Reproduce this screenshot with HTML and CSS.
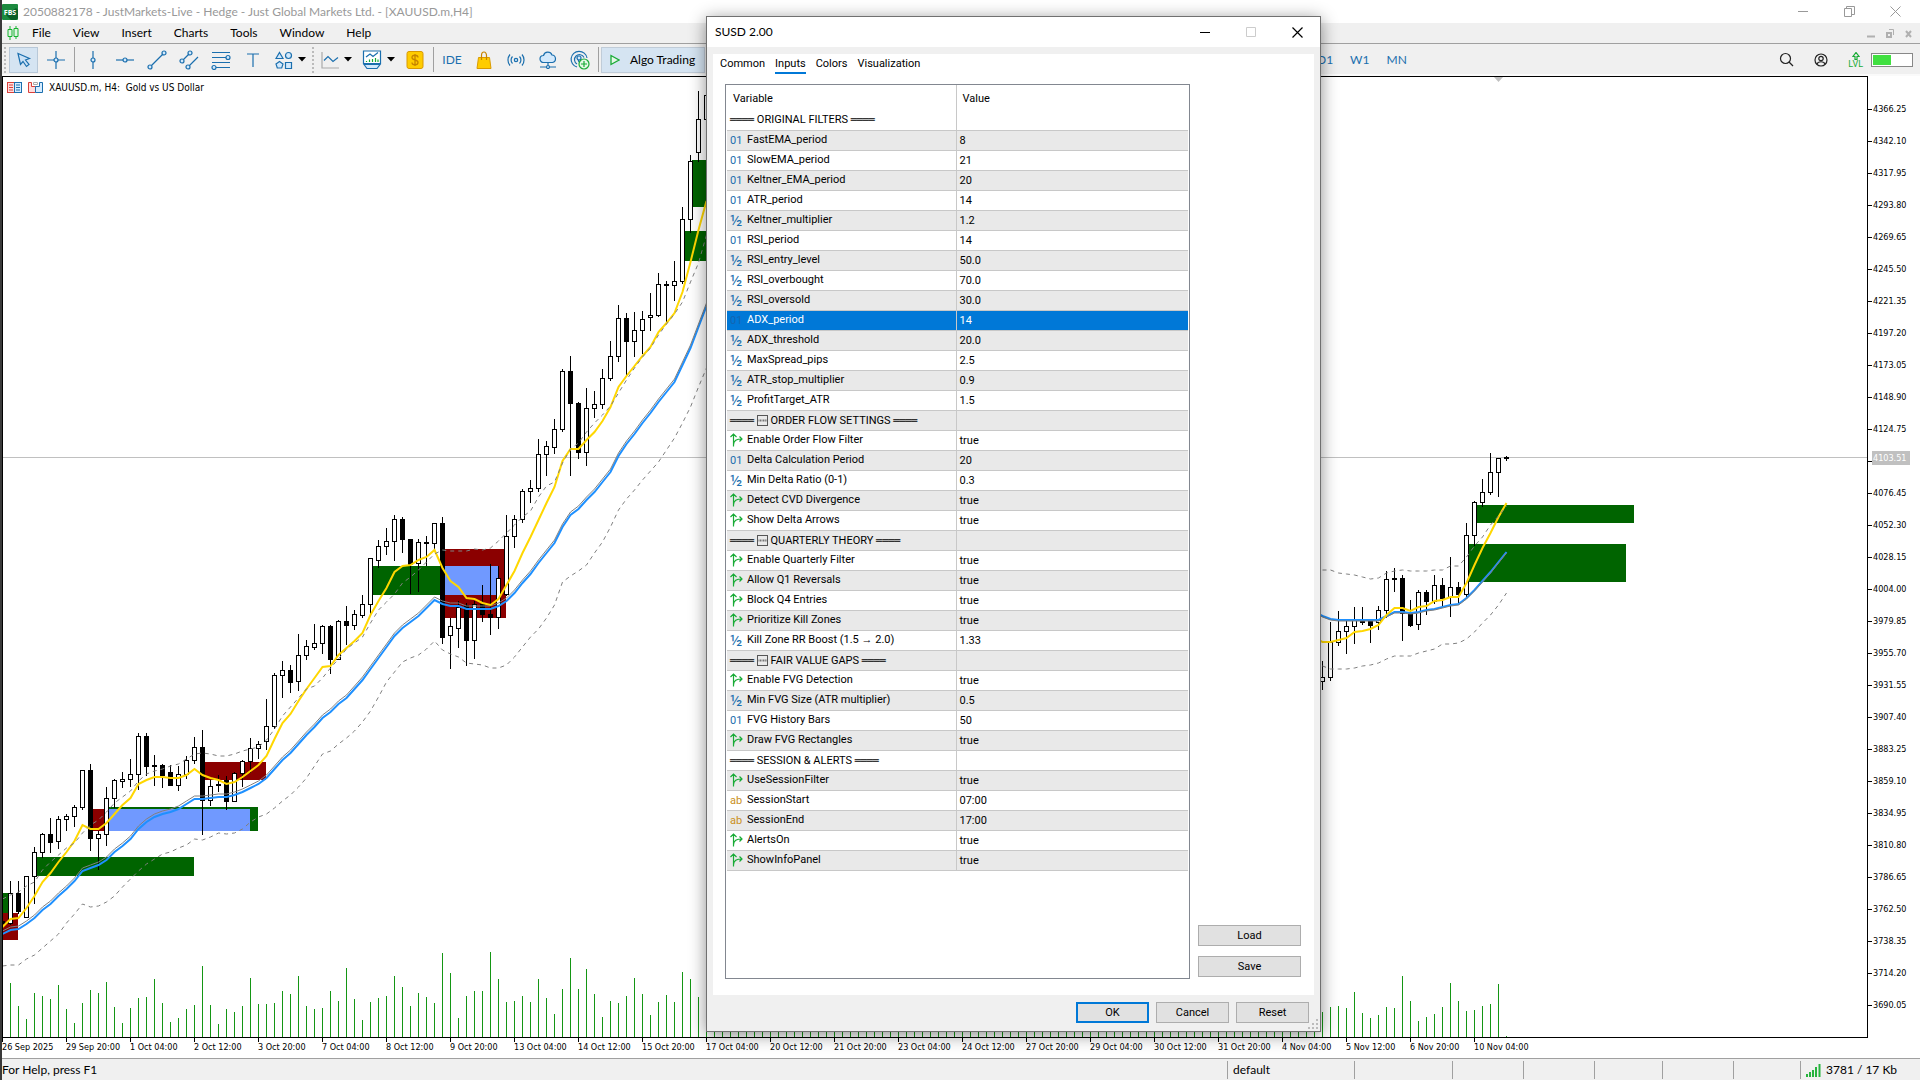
FILE: index.html
```html
<!DOCTYPE html>
<html lang="en">
<head>
<meta charset="utf-8">
<title>2050882178 - JustMarkets-Live - Hedge - Just Global Markets Ltd. - [XAUUSD.m,H4]</title>
<link rel="stylesheet" href="styles.css">
</head>
<body>
<svg class="sprite" aria-hidden="true">
  <symbol id="i-flag" viewBox="0 0 13 14"><path d="M3.500 13.500V1.500M.5 4l3-3 3 3M3.500 12c0-4.500 3-6 8.500-6M9.500 3.500L12 6 9.500 8.500" fill="none" stroke="#19ab36" stroke-width="1.200"/></symbol>
  <symbol id="i-new" viewBox="0 0 11 11"><rect x=".5" y=".5" width="10" height="10" fill="none" stroke="#555"/><path d="M2 4.500v2M3.500 4.500v2M5 4.500v2M6.500 4.500v2M8 4.500v2M9 4.500v2" stroke="#555" stroke-width=".8"/></symbol>
  <symbol id="i-caret" viewBox="0 0 8 5"><path d="M0 0h8L4 4.500z" fill="#000"/></symbol>
</svg>

<div class="app">
  <header class="titlebar">
    <svg class="logo" viewBox="0 0 16 16"><rect width="16" height="16" rx="1" fill="#1c8a3f"/><path d="M4 11l10-7 2 2v8l-2 2H9z" fill="#0b5f28"/><text x="8" y="11" text-anchor="middle" class="logo-text">FBS</text></svg>
    <h1 class="app-title">2050882178 - JustMarkets-Live - Hedge - Just Global Markets Ltd. - [XAUUSD.m,H4]</h1>
    <div class="window-buttons">
      <button type="button" aria-label="Minimize"><svg width="11" height="11"><path d="M0 5.500h10" stroke="#999"/></svg></button>
      <button type="button" aria-label="Restore"><svg width="11" height="11"><path d="M.5 2.500h7v8h-7zM2.500 2.500v-2h8v8h-3" fill="none" stroke="#999"/></svg></button>
      <button type="button" aria-label="Close"><svg width="11" height="11"><path d="M.5.5l10 10M10.500.5l-10 10" stroke="#999"/></svg></button>
    </div>
  </header>

  <nav class="menubar">
    <svg class="menu-logo" viewBox="0 0 12 14"><path d="M3 0v14M9 0v13" stroke="#15b32f"/><path d="M1 3.500h4v7H1zM7 2.500h4v8H7z" fill="#dff5e2" stroke="#15b32f"/></svg>
    <button type="button">File</button><button type="button">View</button><button type="button">Insert</button><button type="button">Charts</button><button type="button">Tools</button><button type="button">Window</button><button type="button">Help</button>
    <div class="mdi-buttons">
      <svg width="8" height="9"><path d="M0 7.500h8" stroke="#b0b0b0" stroke-width="2"/></svg>
      <svg width="8" height="9"><path d="M1 4h4v4H1z" fill="none" stroke="#b0b0b0" stroke-width="2"/><path d="M3 .5h4.500V6" fill="none" stroke="#b0b0b0"/></svg>
      <svg width="8" height="9"><path d="M1 2l5 6M6 2L1 8" stroke="#b0b0b0" stroke-width="2"/></svg>
    </div>
  </nav>

  <div class="toolbar">
    <span class="grip"></span>
    <button type="button" class="tool pointer" aria-label="Cursor"><svg width="16" height="16" viewBox="0 0 16 16"><path d="M2 1.500l2.500 11 2.500-3 3.500 5 2.500-2-3.500-4.500 4-1.500z" fill="#cbe2f7" stroke="#1b6fae" stroke-width="1.200"/></svg></button>
    <button type="button" class="tool" aria-label="Crosshair"><svg width="18" height="18" viewBox="0 0 18 18" class="line"><path d="M9 0v18M0 9h18"/><circle cx="9" cy="9" r="2" class="dot"/></svg></button>
    <span class="sep"></span>
    <button type="button" class="tool" aria-label="Vertical line"><svg width="18" height="18" viewBox="0 0 18 18" class="line"><path d="M9 0v18"/><circle cx="9" cy="9" r="2" class="dot"/></svg></button>
    <button type="button" class="tool" aria-label="Horizontal line"><svg width="18" height="18" viewBox="0 0 18 18" class="line"><path d="M0 9h18"/><circle cx="9" cy="9" r="2" class="dot"/></svg></button>
    <button type="button" class="tool" aria-label="Trendline"><svg width="20" height="20" viewBox="0 0 20 20" class="line"><path d="M3 17L17 3"/><circle cx="3" cy="17" r="2" class="dot"/><circle cx="17" cy="3" r="2" class="dot"/></svg></button>
    <button type="button" class="tool" aria-label="Channel"><svg width="20" height="20" viewBox="0 0 20 20" class="line"><path d="M3 11l8-8M9 17L19 7"/><circle cx="3" cy="11" r="2" class="dot"/><circle cx="11" cy="3" r="2" class="dot"/><circle cx="9" cy="17" r="2" class="dot"/></svg></button>
    <button type="button" class="tool" aria-label="Fibonacci"><svg width="20" height="20" viewBox="0 0 20 20" class="line"><path d="M1 2.500h18M1 7.500h14M1 12.500h18M5 17.500h14"/><circle cx="17" cy="7.500" r="2" class="dot"/><circle cx="3" cy="17.500" r="2" class="dot"/></svg></button>
    <button type="button" class="tool" aria-label="Text"><svg width="14" height="14" viewBox="0 0 14 14" class="line"><path d="M1 1h12M7 1v13"/></svg></button>
    <button type="button" class="tool wide" aria-label="Shapes"><svg width="18" height="18" viewBox="0 0 18 18" class="line"><path d="M4.500 1.500L8 7.500H1z" class="dot"/><circle cx="13.500" cy="4.500" r="3" class="dot"/><path d="M4.500 10.500L8 13l-1.300 4H2.300L1 13z" class="dot"/><path d="M10.500 11.500h6v6h-6z" class="dot"/></svg><svg class="caret"><use href="#i-caret"/></svg></button>
    <span class="grip"></span>
    <button type="button" class="tool wide" aria-label="Chart type"><svg width="18" height="18" viewBox="0 0 18 18" class="line"><path d="M1 1v16h17" stroke="#aaa"/><path d="M3 9.500l4-4 5 5 5-4"/></svg><svg class="caret"><use href="#i-caret"/></svg></button>
    <button type="button" class="tool wide" aria-label="Indicators"><svg width="20" height="20" viewBox="0 0 20 20" class="line"><path d="M1.500 1h17v12.500h-17z" fill="#fff"/><path d="M4 7l4-3 3 2.500 5-4"/><path d="M4.500 12v-1M7.500 12V9.500M10.500 12V9M13.500 12V8M16 12V9.500" stroke="#19ab36"/><path d="M2 14.500l3 4h10l3-4z" class="dot"/></svg><svg class="caret"><use href="#i-caret"/></svg></button>
    <button type="button" class="tool" aria-label="Trade"><svg width="18" height="18" viewBox="0 0 18 18"><rect x="1" y=".5" width="16" height="17" rx="2" fill="#fc0" stroke="#d99a00"/><path d="M12 6.500c0-3-6-3-6 0 0 3.500 6 1.500 6 5 0 3-6 3-6 0M9 3v12" fill="none" stroke="#c68400" stroke-width="1.300"/></svg></button>
    <span class="sep"></span>
    <button type="button" class="tool text-tool">IDE</button>
    <button type="button" class="tool" aria-label="Market"><svg width="16" height="18" viewBox="0 0 16 18"><path d="M2.500 6.500h11l1.500 11H1z" fill="#fc0" stroke="#d99a00"/><path d="M5.500 9V4.500a2.500 3.500 0 015 0V9" fill="none" stroke="#c68400" stroke-width="1.200"/></svg></button>
    <button type="button" class="tool" aria-label="Signals"><svg width="18" height="14" viewBox="0 0 18 14" class="line"><circle cx="9" cy="7" r="1.700" class="dot"/><path d="M5.500 3.500a5 5 0 000 7M3 1.500a8.500 8.500 0 000 11M12.500 3.500a5 5 0 010 7M15 1.500a8.500 8.500 0 010 11"/></svg></button>
    <button type="button" class="tool" aria-label="VPS"><svg width="18" height="18" viewBox="0 0 18 18" class="line"><path d="M4.500 11.500a3.500 3.500 0 010-7 4.500 4.500 0 018.500-.500 3.800 3.800 0 01.5 7.500z" class="dot"/><path d="M9 11.500v3M1 16h16"/><circle cx="9" cy="16" r="1.500" class="dot"/></svg></button>
    <button type="button" class="tool" aria-label="Copy trading"><svg width="20" height="20" viewBox="0 0 20 20" class="line"><path d="M7 17A8 8 0 1117 8M7 14a5 5 0 117-6.500M9 12L7.500 8"/><circle cx="9" cy="8" r="2" class="dot"/><circle cx="14" cy="14" r="5" fill="#e3f7e5" stroke="#19ab36"/><path d="M14 11v6M11 14h6" stroke="#19ab36"/></svg></button>
    <span class="sep"></span>
    <button type="button" class="algo"><svg width="10" height="12" viewBox="0 0 10 12"><path d="M1 1.500v9L9 6z" fill="#e6f8e8" stroke="#19ab36" stroke-width="1.300"/></svg>Algo Trading</button>
    <div class="timeframes"><button type="button">D1</button><button type="button">W1</button><button type="button">MN</button></div>
    <div class="toolbar-right">
      <button type="button" aria-label="Search"><svg width="15" height="15" viewBox="0 0 15 15"><circle cx="6.500" cy="6.500" r="5" fill="none" stroke="#222" stroke-width="1.200"/><path d="M10 10l4 4" stroke="#222" stroke-width="1.300"/></svg></button>
      <button type="button" aria-label="Account"><svg width="14" height="14" viewBox="0 0 14 14" fill="none" stroke="#222" stroke-width="1.200"><circle cx="7" cy="7" r="6"/><circle cx="7" cy="5.500" r="2.200"/><path d="M3 11c1-3 7-3 8 0"/></svg></button>
      <span class="lvl"><svg width="8" height="8" viewBox="0 0 8 8"><path d="M3 7.500V4.500H1L4 .5l3 4H5v3z" fill="none" stroke="#19ab36" stroke-width="1.200"/></svg>LVL</span>
      <span class="battery"><i></i></span>
    </div>
  </div>

  <main class="chart">
    <section class="plot" aria-label="XAUUSD.m H4 chart">
      <svg id="plot" class="plot-canvas"></svg>
      <div class="symbol">
        <svg width="15" height="12" viewBox="0 0 15 12"><rect x=".5" y=".5" width="7" height="10" fill="#fdd" stroke="#d9403a"/><rect x="7.500" y=".5" width="7" height="10" fill="#d6ecff" stroke="#1b6fae"/><path d="M2 3h4M2 5.500h4M2 8h4" stroke="#d9403a"/><path d="M9 3h4M9 5.500h4M9 8h4" stroke="#1b6fae"/></svg>
        <svg width="15" height="12" viewBox="0 0 15 12"><path d="M.5.5h3v4h4v6h-7z" fill="#fdd" stroke="#d9403a"/><path d="M14.500.5h-3v4h-4v6h7z" fill="#d6ecff" stroke="#1b6fae"/><path d="M5.500.5h4v2h-4z" fill="none" stroke="#aaa"/></svg>
        <span>XAUUSD.m, H4:&nbsp; Gold vs US Dollar</span>
      </div>
    </section>
    <ol class="price-axis">
      <li>4366.25</li><li>4342.10</li><li>4317.95</li><li>4293.80</li><li>4269.65</li><li>4245.50</li><li>4221.35</li><li>4197.20</li><li>4173.05</li><li>4148.90</li><li>4124.75</li><li>4100.60</li><li>4076.45</li><li>4052.30</li><li>4028.15</li><li>4004.00</li><li>3979.85</li><li>3955.70</li><li>3931.55</li><li>3907.40</li><li>3883.25</li><li>3859.10</li><li>3834.95</li><li>3810.80</li><li>3786.65</li><li>3762.50</li><li>3738.35</li><li>3714.20</li><li>3690.05</li>
      <li class="last-price">4103.51</li>
    </ol>
    <ol class="time-axis">
      <li>26 Sep 2025</li><li>29 Sep 20:00</li><li>1 Oct 04:00</li><li>2 Oct 12:00</li><li>3 Oct 20:00</li><li>7 Oct 04:00</li><li>8 Oct 12:00</li><li>9 Oct 20:00</li><li>13 Oct 04:00</li><li>14 Oct 12:00</li><li>15 Oct 20:00</li><li>17 Oct 04:00</li><li>20 Oct 12:00</li><li>21 Oct 20:00</li><li>23 Oct 04:00</li><li>24 Oct 12:00</li><li>27 Oct 20:00</li><li>29 Oct 04:00</li><li>30 Oct 12:00</li><li>31 Oct 20:00</li><li>4 Nov 04:00</li><li>5 Nov 12:00</li><li>6 Nov 20:00</li><li>10 Nov 04:00</li>
    </ol>
  </main>

  <footer class="statusbar">
    <span class="help">For Help, press F1</span>
    <span class="cell profile">default</span><span class="cell w98"></span><span class="cell w71"></span><span class="cell w71"></span><span class="cell w68"></span><span class="cell w71"></span><span class="cell w67"></span>
    <span class="cell traffic"><svg width="15" height="14" viewBox="0 0 15 14"><path d="M1 14v-3M4 14V9M7 14V7M10 14V4M13.500 14V1" stroke="#27b33e" stroke-width="2"/></svg>3781 / 17 Kb</span>
  </footer>
</div>

<div class="dialog" role="dialog" aria-labelledby="dlg-title">
  <div class="dialog-title">
    <h2 id="dlg-title">SUSD 2.00</h2>
    <button type="button" aria-label="Minimize"><svg width="11" height="11"><path d="M0 5.500h10" stroke="#000"/></svg></button>
    <button type="button" aria-label="Maximize" disabled><svg width="11" height="11"><path d="M.5.5h9v9h-9z" fill="none" stroke="#ccc"/></svg></button>
    <button type="button" aria-label="Close"><svg width="11" height="11"><path d="M.5.5l10 10M10.500.5l-10 10" stroke="#000" stroke-width="1.200"/></svg></button>
  </div>
  <div class="dialog-page">
    <div class="tabs" role="tablist">
      <button type="button" role="tab">Common</button><button type="button" role="tab" class="active" aria-selected="true">Inputs</button><button type="button" role="tab">Colors</button><button type="button" role="tab">Visualization</button>
    </div>
    <div class="page-body">
      <div class="grid">
        <table>
          <thead><tr><th>Variable</th><th>Value</th></tr></thead>
          <tbody>
            <tr class="group"><td><b>════</b> ORIGINAL FILTERS <b>════</b></td><td></td></tr>
            <tr><td><i class="int">01</i>FastEMA_period</td><td>8</td></tr>
            <tr><td><i class="int">01</i>SlowEMA_period</td><td>21</td></tr>
            <tr><td><i class="int">01</i>Keltner_EMA_period</td><td>20</td></tr>
            <tr><td><i class="int">01</i>ATR_period</td><td>14</td></tr>
            <tr><td><i class="dbl">½</i>Keltner_multiplier</td><td>1.2</td></tr>
            <tr><td><i class="int">01</i>RSI_period</td><td>14</td></tr>
            <tr><td><i class="dbl">½</i>RSI_entry_level</td><td>50.0</td></tr>
            <tr><td><i class="dbl">½</i>RSI_overbought</td><td>70.0</td></tr>
            <tr><td><i class="dbl">½</i>RSI_oversold</td><td>30.0</td></tr>
            <tr class="selected"><td><i class="int">01</i>ADX_period</td><td>14</td></tr>
            <tr><td><i class="dbl">½</i>ADX_threshold</td><td>20.0</td></tr>
            <tr><td><i class="dbl">½</i>MaxSpread_pips</td><td>2.5</td></tr>
            <tr><td><i class="dbl">½</i>ATR_stop_multiplier</td><td>0.9</td></tr>
            <tr><td><i class="dbl">½</i>ProfitTarget_ATR</td><td>1.5</td></tr>
            <tr class="group"><td><b>════</b> <svg class="new"><use href="#i-new"/></svg> ORDER FLOW SETTINGS <b>════</b></td><td></td></tr>
            <tr><td><i><svg class="flag"><use href="#i-flag"/></svg></i>Enable Order Flow Filter</td><td>true</td></tr>
            <tr><td><i class="int">01</i>Delta Calculation Period</td><td>20</td></tr>
            <tr><td><i class="dbl">½</i>Min Delta Ratio (0-1)</td><td>0.3</td></tr>
            <tr><td><i><svg class="flag"><use href="#i-flag"/></svg></i>Detect CVD Divergence</td><td>true</td></tr>
            <tr><td><i><svg class="flag"><use href="#i-flag"/></svg></i>Show Delta Arrows</td><td>true</td></tr>
            <tr class="group"><td><b>════</b> <svg class="new"><use href="#i-new"/></svg> QUARTERLY THEORY <b>════</b></td><td></td></tr>
            <tr><td><i><svg class="flag"><use href="#i-flag"/></svg></i>Enable Quarterly Filter</td><td>true</td></tr>
            <tr><td><i><svg class="flag"><use href="#i-flag"/></svg></i>Allow Q1 Reversals</td><td>true</td></tr>
            <tr><td><i><svg class="flag"><use href="#i-flag"/></svg></i>Block Q4 Entries</td><td>true</td></tr>
            <tr><td><i><svg class="flag"><use href="#i-flag"/></svg></i>Prioritize Kill Zones</td><td>true</td></tr>
            <tr><td><i class="dbl">½</i>Kill Zone RR Boost (1.5 → 2.0)</td><td>1.33</td></tr>
            <tr class="group"><td><b>════</b> <svg class="new"><use href="#i-new"/></svg> FAIR VALUE GAPS <b>════</b></td><td></td></tr>
            <tr><td><i><svg class="flag"><use href="#i-flag"/></svg></i>Enable FVG Detection</td><td>true</td></tr>
            <tr><td><i class="dbl">½</i>Min FVG Size (ATR multiplier)</td><td>0.5</td></tr>
            <tr><td><i class="int">01</i>FVG History Bars</td><td>50</td></tr>
            <tr><td><i><svg class="flag"><use href="#i-flag"/></svg></i>Draw FVG Rectangles</td><td>true</td></tr>
            <tr class="group"><td><b>════</b> SESSION &amp; ALERTS <b>════</b></td><td></td></tr>
            <tr><td><i><svg class="flag"><use href="#i-flag"/></svg></i>UseSessionFilter</td><td>true</td></tr>
            <tr><td><i class="str">ab</i>SessionStart</td><td>07:00</td></tr>
            <tr><td><i class="str">ab</i>SessionEnd</td><td>17:00</td></tr>
            <tr><td><i><svg class="flag"><use href="#i-flag"/></svg></i>AlertsOn</td><td>true</td></tr>
            <tr><td><i><svg class="flag"><use href="#i-flag"/></svg></i>ShowInfoPanel</td><td>true</td></tr>
          </tbody>
        </table>
      </div>
      <div class="side-buttons"><button type="button" class="btn">Load</button><button type="button" class="btn">Save</button></div>
    </div>
  </div>
  <div class="dialog-actions">
    <button type="button" class="btn default">OK</button><button type="button" class="btn">Cancel</button><button type="button" class="btn">Reset</button>
  </div>
  <svg class="resize" width="11" height="11" aria-hidden="true"><path d="M8 1h2M8 5h2M8 9h2M4 5h2M4 9h2M0 9h2" stroke="#bbb" stroke-width="2"/></svg>
</div>
<script src="chart.js"></script>
</body>
</html>
```
FILE: styles.css
```css
* { box-sizing: border-box; }
body { margin: 0; background: #3a3a3a; color: #000; font: 12px/16px Lato, "Open Sans", sans-serif; overflow: hidden; }
button { margin: 0; padding: 0; border: 0; background: none; color: inherit; font: inherit; }
svg { display: block; flex: none; }
h1, h2, ol { margin: 0; padding: 0; font: inherit; list-style: none; }
.sprite { position: absolute; width: 0; height: 0; }

.app { display: flex; flex-direction: column; height: 100vh; margin-left: 2px; background: #f0f0f0; }

.titlebar { display: flex; align-items: center; height: 23px; background: #fff; color: #999; }
.logo { width: 16px; height: 16px; }
.logo-text { font: bold 7px "Open Sans", sans-serif; fill: #fff; }
.app-title { flex: 1; padding-left: 5px; }
.window-buttons { display: flex; padding-right: 2px; }
.window-buttons button { display: flex; justify-content: center; width: 46px; }

.menubar { display: flex; align-items: center; height: 21px; padding-left: 5px; border-bottom: 1px solid #a0a0a0; }
.menu-logo { width: 12px; height: 14px; margin-right: 2px; }
.menubar button { padding: 0 11px; }
.mdi-buttons { display: flex; gap: 11px; margin-left: auto; padding-right: 7px; }

.toolbar { display: flex; align-items: center; height: 32px; padding: 1px 7px 0 1px; border-bottom: 2px solid #fafafa; color: #1b6fae; }
.tool { display: flex; align-items: center; justify-content: center; width: 32px; height: 26px; }
.tool.pointer { width: 29px; margin: 0 2px; border: 1px solid #b8c8d8; background: #d5e4f2; }
.tool.wide { gap: 5px; width: 42px; }
.caret { width: 8px; height: 5px; }
.text-tool { font-size: 12px; }
.line { fill: none; stroke: #1b6fae; stroke-width: 1.2; }
.line .dot { fill: #d3e9fc; }
.grip { width: 2px; height: 26px; margin: 0 1px; background: repeating-linear-gradient(#bbb 0 2px, #f0f0f0 2px 4px); }
.sep { width: 1px; height: 25px; margin: 0 2px; background: #a0a0a0; }
.algo { display: flex; align-items: center; gap: 10px; width: 104px; height: 26px; padding-left: 8px; border: 1px solid #c0ccd8; background: #d5e4f2; color: #000; white-space: nowrap; }
.timeframes { display: flex; gap: 17px; margin-left: 612px; }
.toolbar-right { display: flex; align-items: center; gap: 20px; margin-left: auto; }
.lvl { display: flex; flex-direction: column; align-items: center; color: #19ab36; font: 9px/8px Roboto, sans-serif; }
.battery { width: 42px; height: 14px; margin-left: -12px; padding: 1px; border: 1px solid #888; background: #fff; }
.battery i { display: block; width: 48%; height: 100%; background: #41e041; }

.chart { flex: 1; display: grid; grid-template: minmax(0, 1fr) 20px / minmax(0, 1fr) 52px; min-height: 0; background: #fff; font: 9px/12px "DejaVu Sans Condensed", "DejaVu Sans", sans-serif; }
.plot { position: relative; overflow: hidden; border: 1px solid #000; }
.plot-canvas { width: 100%; height: 100%; }
.symbol { position: absolute; top: 5px; left: 4px; display: flex; gap: 6px; font-size: 10px; }
.price-axis { position: relative; padding-top: 17px; overflow: hidden; }
.price-axis li { display: flex; align-items: center; gap: 1px; height: 32px; }
.price-axis li::before { content: ""; width: 4px; height: 1px; background: #000; }
.price-axis .last-price { position: absolute; top: 375px; left: 4px; height: 14px; width: 38px; background: #c0c0c0; color: #fff; }
.price-axis .last-price::before { width: 0; }
.time-axis { display: flex; grid-column: 1 / 3; overflow: hidden; line-height: 10px; }
.time-axis li { flex: 0 0 64px; white-space: nowrap; }
.time-axis li::before { content: ""; display: block; width: 1px; height: 4px; background: #000; }

.statusbar { display: flex; height: 22px; border-top: 1px solid #a0a0a0; line-height: 21px; }
.help { flex: 1; }
.cell { display: flex; align-items: center; gap: 5px; margin: 2px 0 1px; padding-left: 5px; border-left: 1px solid #a0a0a0; line-height: 16px; }
.profile { width: 127px; }
.w98 { width: 98px; }
.w71 { width: 71px; }
.w68 { width: 68px; }
.w67 { width: 67px; }
.traffic { width: 120px; }

.dialog { position: absolute; top: 16px; left: 706px; width: 615px; display: flex; flex-direction: column; border: 1px solid #707070; background: #f0f0f0; box-shadow: 0 3px 16px rgba(0, 0, 0, .45); font: 11px/16px Roboto, sans-serif; }
.dialog-title { display: flex; align-items: center; height: 30px; padding-left: 8px; background: #fff; }
.dialog-title h2 { flex: 1; font: 12px/16px Lato, "Open Sans", sans-serif; }
.dialog-title button { display: flex; justify-content: center; width: 46px; }
.dialog-page { margin: 7px 6px 0; padding: 0 13px 16px 12px; background: #fff; }
.tabs { display: flex; gap: 10px; height: 30px; margin-left: -5px; }
.tabs button { height: 20px; padding-top: 2px; border-bottom: 2px solid transparent; }
.tabs .active { border-color: #0078d7; }
.page-body { display: flex; gap: 8px; }
.grid { flex: 1; height: 895px; padding: 0 1px; border: 1px solid #828790; }
table { width: 100%; border-collapse: collapse; table-layout: fixed; }
th { height: 25px; padding: 2px 6px 0; font-weight: normal; text-align: left; }
th:first-child { width: 229px; }
td { height: 20px; padding: 1px 3px 0; border-bottom: 1px solid #c8c8c8; white-space: nowrap; }
th:first-child, td:first-child { border-right: 1px solid #c8c8c8; }
tbody tr:nth-child(even) { background: #e9e9e9; }
tbody tr.selected { background: #0078d7; color: #fff; }
td i { display: inline-block; width: 17px; height: 16px; font-style: normal; vertical-align: middle; color: #1b6fae; line-height: 16px; }
td i.dbl { font-size: 16px; }
td i.str { color: #c98f1b; }
.selected i.int { color: #1365b0; }
td b { font: 10px/16px "DejaVu Sans Mono", monospace; }
.flag { width: 13px; height: 14px; }
.new { display: inline-block; width: 11px; height: 11px; vertical-align: middle; }
.side-buttons { display: flex; flex-direction: column; justify-content: flex-end; gap: 10px; width: 103px; padding-bottom: 2px; }
.btn { width: 73px; height: 21px; border: 1px solid #adadad; background: #e1e1e1; }
.side-buttons .btn { width: 103px; }
.btn.default { border: 2px solid #0078d7; }
.dialog-actions { display: flex; justify-content: flex-end; gap: 7px; padding: 7px 11px 8px; }
.resize { position: absolute; right: 1px; bottom: 1px; }

.zone-green { fill: #006400; }
.zone-red { fill: #8b0000; }
.zone-blue { fill: #7099ff; }
.volume { stroke: #149614; }
.wick { stroke: #000; }
.up { fill: #fff; stroke: #000; }
.down { fill: #000; stroke: #000; }
.fast { fill: none; stroke: #ffd700; stroke-width: 2; }
.slow { fill: none; stroke: #1e90ff; stroke-width: 2; }
.middle { fill: none; stroke: #808080; }
.band { fill: none; stroke: #808080; stroke-dasharray: 4 4; }
.price-line { stroke: #c0c0c0; }
.shift-mark { fill: #c0c0c0; }
```
FILE: chart.js
```js
// Bars are 8px apart; all y values are measured in the window's own coordinates.
const STEP = 8, LEFT = 2, BOTTOM = 1037;
const NS = 'http://www.w3.org/2000/svg';
const svg = document.getElementById('plot');
const root = document.createElementNS(NS, 'g');
root.setAttribute('transform', 'translate(-3 -77)');
svg.append(root);

function add(tag, cls, attrs) {
  const el = document.createElementNS(NS, tag);
  el.setAttribute('class', cls);
  for (const key in attrs) el.setAttribute(key, attrs[key]);
  root.append(el);
}
const barX = k => LEFT + STEP * k;

// class, left, top, right, bottom
[
  ['green', 3, 893, 8, 913], ['red', 3, 913, 18, 940], ['green', 37, 857, 194, 876],
  ['red', 92, 809, 107, 831], ['green', 109, 807, 258, 831], ['blue', 109, 809, 250, 831],
  ['red', 205, 762, 266, 780], ['green', 373, 566, 440, 595], ['red', 445, 549, 506, 618],
  ['blue', 445, 566, 498, 595], ['green', 692, 160, 720, 207], ['green', 684, 231, 720, 261],
  ['green', 1477, 505, 1634, 523], ['green', 1469, 544, 1626, 582]
].forEach(([c, x1, y1, x2, y2]) => add('rect', 'zone-' + c, { x: x1, y: y1, width: x2 - x1, height: y2 - y1 }));

add('line', 'price-line', { x1: 0, x2: 8000, y1: 457.5, y2: 457.5 });
add('path', 'shift-mark', { d: 'M1494 77h9l-4.500 5z' });

// top of each volume bar
const volumes = {
  1: [983, 1006, 1019, 993, 996, 999, 985, 1009, 1023, 1003, 990, 993, 982, 1007, 1023, 1008, 998, 997, 979, 1003, 1022, 1018, 1009, 1005, 966, 1005, 1024, 1009, 1012, 1006, 978, 1004, 1004, 1003, 991, 994, 976, 1006, 1009, 1008, 991, 1001, 968, 999, 1020, 1002, 998, 996, 976, 987, 1006, 993, 997, 1003, 953, 973, 1018, 996, 991, 991, 952, 979, 1002, 1001, 996, 1002, 979, 998, 1014, 989, 958, 989, 969, 994, 1017, 1001, 1003, 996, 978, 994, 1015, 1002, 995, 1002, 972, 979, 997, 977],
  89: new Array(76).fill(1015),
  165: [1012, 1007, 1006, 1008, 992, 1013, 1018, 1015, 1007, 1008, 976, 1001, 1021, 1017, 1014, 1007, 983, 1001, 1011, 1010, 1006, 1004, 984, 1036]
};
for (const start in volumes) volumes[start].forEach((y, i) => {
  const x = barX(+start + i) + .5;
  add('line', 'volume', { x1: x, x2: x, y1: y, y2: BOTTOM });
});

// high, body top, body bottom, low, 1 when the bar closed down
const candles = {
  0: [[921,921,923,924,1],[881,893,923,924],[881,893,911,913,1],[876,876,917,917],[847,852,876,903],[833,834,852,857],[818,834,842,852,1],[816,819,841,848],[814,816,819,830],[805,807,816,826],
    [770,770,807,809],[764,770,838,850,1],[831,834,838,869],[787,798,834,845],[779,780,798,807],[772,779,781,787],[759,774,779,786],[733,736,774,789],[733,736,766,775,1],[755,765,766,785,1],
    [764,765,775,787,1],[765,772,785,785,1],[766,774,785,790],[756,760,774,778],[737,747,760,763],[730,747,800,834,1],[780,786,800,805],[775,784,785,791,1],[776,780,801,809,1],[772,773,801,801],
    [760,761,773,786],[738,748,761,772],[741,744,748,758],[699,726,741,749],[673,675,726,728],[661,670,675,697],[665,670,682,692,1],[634,655,681,690],[640,646,655,659],[624,643,647,649],
    [625,626,643,653],[625,626,659,673,1],[620,621,659,659],[606,621,625,644,1],[610,614,625,629],[595,604,615,617],[558,558,604,614],[540,546,560,567],[528,541,546,554],[515,519,541,560],
    [517,519,539,552,1],[539,539,564,593,1],[539,542,563,591],[536,542,543,565,1],[523,523,543,548],[517,523,637,643,1],[618,626,635,668],[601,607,628,647],[603,605,640,665,1],[601,604,640,658],
    [585,604,614,621,1],[564,614,617,634,1],[566,578,617,628],[515,536,594,595],[515,519,536,547],[489,491,519,522],[480,488,491,502],[439,454,488,491],[441,446,454,475],[419,429,447,453],
    [369,371,429,431],[356,371,403,475,1],[402,403,452,458,1],[388,408,452,465],[391,404,408,417],[369,378,404,408],[341,356,378,380],[305,318,356,361],[313,318,341,375,1],[312,330,341,356],
    [311,319,330,353],[293,315,317,330],[273,284,315,316],[281,284,285,321,1],[261,281,285,300],[207,219,281,283],[155,161,219,232],[91,119,152,161],[94,95,119,225]],
  165: [[661,677,681,689],[622,642,677,680],[611,631,642,645],[620,626,631,653],[607,619,626,643],[607,619,622,624,1],[620,621,625,642,1],[606,610,622,629],[571,579,610,617],[568,578,579,591,1],
    [575,578,613,640,1],[600,613,625,626,1],[590,592,624,629],[590,592,601,614,1],[575,585,601,603],[578,585,598,607,1],[557,587,597,616],[582,587,594,602,1],[523,535,594,597],[501,502,535,545],
    [479,492,502,506],[453,472,492,494],[458,458,472,496],[456,457,458,460,1]]
};
for (const start in candles) candles[start].forEach(([high, top, bottom, low, down], i) => {
  const x = barX(+start + i) + .5;
  add('line', 'wick', { x1: x, x2: x, y1: high, y2: low + 1 });
  add('rect', down ? 'down' : 'up', { x: x - 2, y: top + .5, width: 4, height: Math.max(bottom - top, 1) });
});

function series(cls, start, ys, shift = 0) {
  add('polyline', cls, { points: ys.map((y, i) => `${barX(start + i) + .5},${y + shift}`).join(' ') });
}

const slowLeft = [934,930,929,924,918,910,904,896,889,881,871,868,865,860,852,846,839,829,822,817,814,812,809,804,799,799,798,797,797,795,792,788,784,778,769,760,753,744,735,727,718,712,704,698,689,680,669,658,647,636,628,622,616,608,600,604,606,606,609,609,609,609,606,601,593,583,574,563,553,543,527,515,509,500,492,482,472,456,444,434,423,413,402,392,382,365,348,327,306];
const slowRight = [612,616,619,620,620,620,620,620,620,616,612,612,613,612,610,609,607,605,604,598,590,581,572,562,552];
series('slow', 0, slowLeft);
series('slow', 164, slowRight);
series('middle', 0, slowLeft, -3);
series('middle', 164, slowRight, 1);

series('fast', 0, [927,919,918,908,896,882,873,862,852,841,825,829,829,823,814,805,798,784,780,777,777,778,778,775,769,775,778,780,784,782,777,771,765,756,739,723,714,701,689,678,667,666,655,648,641,633,615,601,588,572,566,565,560,557,550,568,581,587,598,599,603,605,599,585,571,553,537,520,503,487,461,449,449,440,432,421,407,387,376,366,356,347,332,323,313,292,262,230,201]);
series('fast', 164, [637,642,642,640,638,632,631,629,625,615,608,608,611,607,606,601,600,597,597,583,565,548,533,517,503]);

series('band', 0, [899,895,892,886,882,870,862,855,848,843,833,825,820,812,803,797,791,781,774,771,769,766,764,759,754,753,754,756,756,754,751,749,747,740,729,716,707,698,689,686,678,668,659,649,643,637,623,610,602,594,583,577,570,562,554,550,551,551,551,549,550,548,541,533,525,517,511,497,486,482,463,449,443,432,423,415,406,393,380,368,357,348,335,324,314,302,282,263,235]);
series('band', 164, [570,570,570,573,574,575,577,579,578,573,571,570,571,571,571,570,570,566,566,557,546,537,525,516,506]);
series('band', 0, [966,965,965,959,955,948,941,934,923,914,904,907,906,902,896,887,879,871,864,859,854,852,848,845,839,840,837,833,834,833,829,822,817,814,808,801,795,787,778,766,754,751,744,738,731,722,711,697,682,672,662,658,655,649,641,650,654,657,663,664,665,668,668,665,657,647,637,629,618,605,582,576,571,565,553,542,527,510,499,490,480,471,462,450,438,423,407,387,368]);
series('band', 164, [664,666,669,669,669,668,666,665,663,659,656,656,656,653,651,649,644,644,643,639,632,623,615,605,593]);
```
